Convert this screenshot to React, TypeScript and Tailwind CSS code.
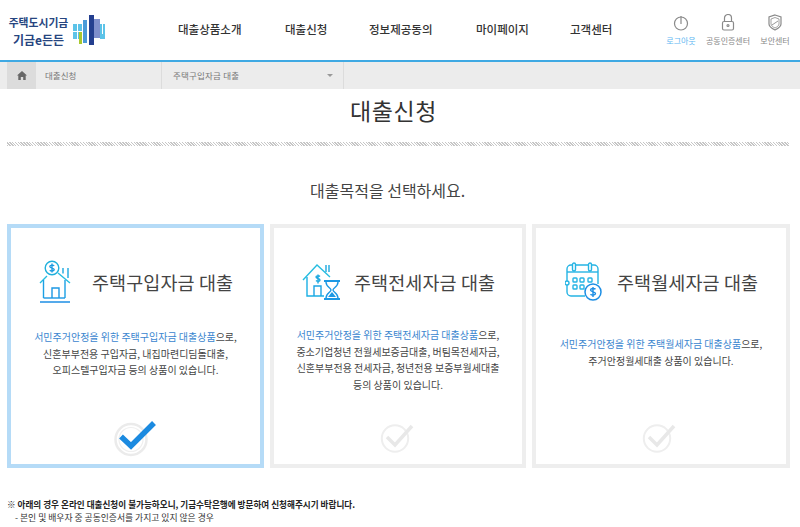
import React from "react";

const F = { fontFamily: '"Noto Sans CJK KR", "Noto Sans", sans-serif' };

function Logo() {
  return (
    <svg width="32" height="30" viewBox="0 0 32 30" className="block">
      <rect x="0" y="9" width="9" height="7" fill="#5cc3e8" />
      <rect x="0" y="17" width="9" height="7" fill="#5cc3e8" />
      <rect x="6" y="17" width="3" height="12" fill="#a8c82e" />
      <rect x="10" y="5" width="4" height="23" fill="#4a9bd8" />
      <rect x="16" y="0" width="5" height="30" fill="#243f8f" />
      <rect x="21" y="4" width="6" height="19" fill="#7f8fcc" />
      <rect x="27" y="9" width="5" height="15" fill="#5cc3e8" />
      <rect x="4" y="9" width="1" height="15" fill="#fff" />
      <rect x="0" y="16" width="9" height="1" fill="#fff" />
      <rect x="29" y="9" width="1" height="10" fill="#fff" />
    </svg>
  );
}

function Util({ label, active, children }: { label: string; active?: boolean; children: React.ReactNode }) {
  return (
    <div className="flex w-[40px] flex-col items-center">
      <svg width="20" height="20" viewBox="0 0 20 20" fill="none" stroke="#8a8a8a" strokeWidth="1.2">{children}</svg>
      <span className={`mt-[2px] whitespace-nowrap text-[8px] leading-[10px] ${active ? "text-[#5fb8f2]" : "text-[#888]"}`}>{label}</span>
    </div>
  );
}

function HouseIcon() {
  return (
    <svg width="36" height="44" viewBox="0 0 36 44" fill="none" strokeWidth="1.400">
      <circle cx="15" cy="8" r="6.800" stroke="#1fb0dc" />
      <path d="M15 3.500v9M17.200 5.800c-1-1-4.400-1-4.400 .8s4.400 1.200 4.400 3-3.400 1.600-4.400 .6" stroke="#1c9be0" />
      <path d="M3 23 L10 16 M21 13 L33 23" stroke="#26bde0" />
      <path d="M26 8v5.500M31 8v10" stroke="#1ca8e0" />
      <path d="M6.500 20v18M28 20v18" stroke="#1ca0e4" />
      <path d="M15 38V28h7v10" stroke="#1c98e4" />
      <path d="M6.500 38H28" stroke="#1c98e4" />
      <path d="M3 42h30" stroke="#1c8ee4" strokeWidth="1.500" />
    </svg>
  );
}

function LeaseIcon() {
  return (
    <svg width="40" height="38" viewBox="0 0 40 38" fill="none" strokeWidth="1.400">
      <path d="M2 17 L16 2 L29 14" stroke="#26bde0" />
      <path d="M6 14v19h17" stroke="#1cb0e4" />
      <path d="M13 33V23h7v10" stroke="#1ca4e4" />
      <path d="M25 2v7M28 2v7" stroke="#1ca8e0" />
      <path d="M19 13.500c-1-1-4-1-4 .6s4 1.200 4 2.900-3 1.400-4 .5M17 11.500v9" stroke="#1ca8e0" />
      <path d="M23 18h16M23 36h16" stroke="#1c98e4" strokeWidth="2" />
      <path d="M25 19c0 5 5 6 5 8s-5 3-5 8M37 19c0 5-5 6-5 8s5 3 5 8" stroke="#1c98e4" />
      <path d="M27 34l4-5 4 5z" fill="#1c98e4" />
    </svg>
  );
}

function CalIcon() {
  return (
    <svg width="38" height="40" viewBox="0 0 38 40" fill="none" stroke="#26b4e4" strokeWidth="1.400">
      <path d="M20 34H6a4 4 0 0 1-4-4V7a4 4 0 0 1 4-4h23a4 4 0 0 1 4 4v15" />
      <path d="M2 10h31" />
      <rect x="7.500" y="1" width="3" height="8" rx="1.500" fill="#fff" />
      <rect x="23.500" y="1" width="3" height="8" rx="1.500" fill="#fff" />
      <circle cx="2" cy="21" r="2" fill="#fff" />
      {[8, 15, 23].map((x) => <rect key={x} x={x} y="16" width="4" height="4" rx="0.800" />)}
      {[8, 15].map((x) => <rect key={x} x={x} y="23" width="4" height="4" rx="0.800" />)}
      <circle cx="28" cy="30" r="8" fill="#fff" stroke="#1c8ee4" strokeWidth="1.500" />
      <path d="M28 25v10M30.500 27.300c-1-1.200-5-1.200-5 .8s5 1.400 5 3.400-4 2-5 .8" stroke="#1c8ee4" />
    </svg>
  );
}

function CheckOn() {
  return (
    <svg width="44" height="36" viewBox="0 0 44 36" fill="none" className="block">
      <circle cx="17" cy="18.500" r="15.500" stroke="#ebebeb" strokeWidth="2.500" />
      <circle cx="17" cy="18.500" r="12" stroke="#efefef" strokeWidth="1.200" />
      <path d="M7 15.500 L17 25 L40 2" stroke="#1b8ae0" strokeWidth="5.500" />
    </svg>
  );
}

function CheckOff() {
  return (
    <svg width="34" height="32" viewBox="0 0 34 32" fill="none" className="block">
      <circle cx="15" cy="16.500" r="13.200" stroke="#eeeeee" strokeWidth="2" />
      <path d="M7 15 L15 23 L32 4" stroke="#e8e8e8" strokeWidth="3.500" />
    </svg>
  );
}

function Card({ icon, title, blue, lines, on, className, iconClass, titleClass, bodyTop }: { icon: React.ReactNode; title: string; blue: string; lines: string[]; on?: boolean; className: string; iconClass: string; titleClass: string; bodyTop: string }) {
  return (
    <div className={`flex h-[244px] flex-col items-center border-4 bg-white ${on ? "border-[#b5dbf7]" : "border-[#eeeeee]"} ${className}`}>
      <div className={`mt-[30px] flex h-[48px] items-center self-start ${iconClass}`}>
        {icon}
        <h3 className={`${titleClass} text-[18.500px] font-normal leading-none tracking-[0.1px] whitespace-nowrap text-[#444]`}>{title}</h3>
      </div>
      <p className={`${bodyTop} text-center text-[10px] leading-[16.500px] text-[#444]`}>
        <span className="text-[#3b86cf]">{blue}</span>으로,
        {lines.map((l) => <React.Fragment key={l}><br />{l}</React.Fragment>)}
      </p>
      <div className={on ? "mt-auto mb-[7px] ml-[103px] self-start" : "mt-auto mb-[10px] ml-[106px] self-start"}>
        {on ? <CheckOn /> : <CheckOff />}
      </div>
    </div>
  );
}

export default function App() {
  return (
    <div className="h-[527px] w-[800px] overflow-hidden bg-white" style={F}>
      <header className="flex h-[60px] items-center">
        <div className="ml-[7px] flex w-[98px] items-center">
          <div className="w-[63px] pt-[1px] text-center font-bold whitespace-nowrap text-[#27457f]">
            <div className="text-[10.800px] leading-[14px]">주택도시기금</div>
            <div className="mt-[3px] text-[12px] leading-[15px]">기금e든든</div>
          </div>
          <div className="ml-[3px]"><Logo /></div>
        </div>
        <nav className="flex text-[11.500px] font-medium leading-none text-[#333] whitespace-nowrap">
          <span className="ml-[73px] w-[107px]">대출상품소개</span>
          <span className="w-[84px]">대출신청</span>
          <span className="w-[107px]">정보제공동의</span>
          <span className="w-[94px]">마이페이지</span>
          <span>고객센터</span>
        </nav>
        <div className="mr-[5px] ml-auto flex gap-[7px] self-start pt-[14px]">
          <Util label="로그아웃" active><circle cx="10" cy="9.500" r="6.500" /><path d="M10 2v8" /></Util>
          <Util label="공동인증센터"><rect x="4.500" y="7.500" width="11" height="8.500" rx="1.500" /><path d="M6.500 7.500V4a3.500 3.500 0 0 1 7 0v3.500" /><circle cx="10" cy="11.500" r="1" /></Util>
          <Util label="보안센터"><path d="M10 1l6 2v7c0 2.500-3 4.500-6 6-3-1.500-6-3.500-6-6V3z" /><path d="M10 3.500l4 1.500v5c0 1.700-2 3-4 4-2-1-4-2.300-4-4V5z" strokeWidth="0.800" /><path d="M7 11l6-4" strokeWidth="0.900" /></Util>
        </div>
      </header>
      <div className="h-[2px] bg-[#3fa9e3]" />
      <div className="flex h-[27px] items-stretch bg-[#ececec] text-[8.500px] text-[#777]">
        <div className="ml-[7px] flex w-[29px] items-center justify-center bg-[#dcdcdc]">
          <svg width="10" height="9" viewBox="0 0 10 9" fill="#666"><path d="M5 0L0 4.500h1.300V9h2.500V6h2.400v3h2.500V4.500H10z" /></svg>
        </div>
        <div className="flex w-[125px] items-center pl-[9px]">대출신청</div>
        <div className="flex w-[183px] items-center justify-between border-x border-[#dcdcdc] pr-[10px] pl-[11px] tracking-[0.2px]">
          <span>주택구입자금 대출</span>
          <span className="h-0 w-0 border-x-[3px] border-t-[3px] border-x-transparent border-t-[#999]" />
        </div>
      </div>
      <h1 className="mt-[5px] ml-[350px] text-[23px] font-normal leading-[32px] tracking-[0.6px] text-[#333]">대출신청</h1>
      <div className="mt-[16px] ml-[7px] h-[4px] w-[782px] bg-[repeating-linear-gradient(45deg,#c6c6c6_0,#c6c6c6_1px,#ffffff_1px,#ffffff_2px)]" />
      <h2 className="mt-[33px] ml-[310px] text-[16px] font-normal leading-[22px] text-[#444]">대출목적을 선택하세요.</h2>
      <div className="mt-[23px] ml-[7px] flex w-[783px] gap-[6px]">
        <Card on className="w-[257px]" iconClass="ml-[26px]" titleClass="ml-[19px]" bodyTop="mt-[23px]" icon={<HouseIcon />} title="주택구입자금 대출" blue="서민주거안정을 위한 주택구입자금 대출상품" lines={["신혼부부전용 구입자금, 내집마련디딤돌대출,", "오피스텔구입자금 등의 상품이 있습니다."]} />
        <Card className="w-[256px]" iconClass="ml-[27px]" titleClass="ml-[13px]" bodyTop="mt-[21px]" icon={<LeaseIcon />} title="주택전세자금 대출" blue="서민주거안정을 위한 주택전세자금 대출상품" lines={["중소기업청년 전월세보증금대출, 버팀목전세자금,", "신혼부부전용 전세자금, 청년전용 보증부월세대출", "등의 상품이 있습니다."]} />
        <Card className="w-[258px]" iconClass="ml-[29px]" titleClass="ml-[14px]" bodyTop="mt-[30px]" icon={<CalIcon />} title="주택월세자금 대출" blue="서민주거안정을 위한 주택월세자금 대출상품" lines={["주거안정월세대출 상품이 있습니다."]} />
      </div>
      <div className="mt-[30px] ml-[7px] leading-[13px] text-[#333]">
        <div className="text-[8.600px] font-bold text-[#222]">※ 아래의 경우 온라인 대출신청이 불가능하오니, 기금수탁은행에 방문하여 신청해주시기 바랍니다.</div>
        <div className="pl-[8px] text-[8.800px]">- 본인 및 배우자 중 공동인증서를 가지고 있지 않은 경우</div>
      </div>
    </div>
  );
}
